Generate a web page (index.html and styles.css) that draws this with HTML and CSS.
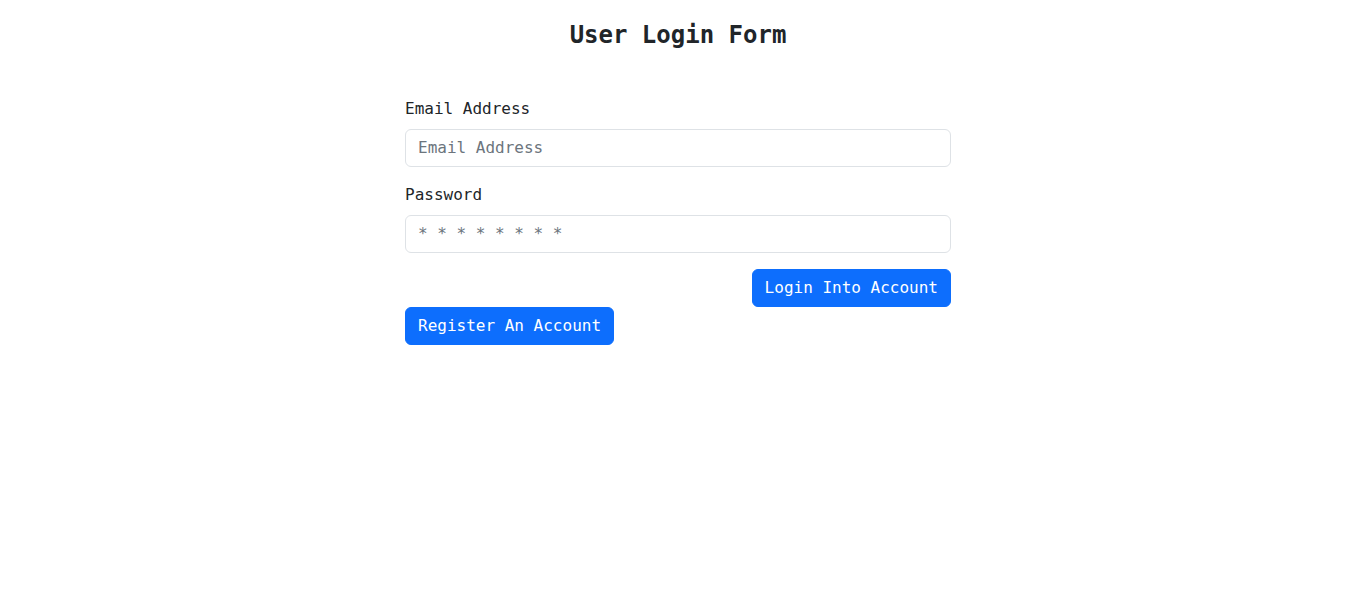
FILE: index.html
```html
<!DOCTYPE html>
<html lang="en">
<head>
<meta charset="utf-8">
<title>User Login Form</title>
<link rel="stylesheet" href="styles.css">
</head>
<body>
<div class="page">
  <h4 class="title">User Login Form</h4>
  <form class="login-form">
    <div class="field">
      <label class="label" for="email">Email Address</label>
      <input class="input" id="email" type="text" placeholder="Email Address">
    </div>
    <div class="field">
      <label class="label" for="password">Password</label>
      <input class="input" id="password" type="text" placeholder="* * * * * * * *">
    </div>
    <div class="actions">
      <button type="button" class="btn">Login Into Account</button>
    </div>
    <div class="actions-left">
      <button type="button" class="btn">Register An Account</button>
    </div>
  </form>
</div>
</body>
</html>
```
FILE: styles.css
```css
* { box-sizing: border-box; }
html, body {
  margin: 0;
  background: #fff;
  color: #212529;
  font-family: "DejaVu Sans Mono", "Liberation Mono", monospace;
  font-size: 16px;
  line-height: 1.5;
}
.page {
  width: 548px;
  margin: 0 auto;
  padding: 21px 2px 0 0;
}
.title {
  margin: 0 0 47px;
  text-align: center;
  font-size: 24px;
  font-weight: 700;
  line-height: 1.2;
}
.field {
  margin-bottom: 16px;
}
.label {
  display: block;
  margin-bottom: 8px;
}
.input {
  display: block;
  width: 100%;
  height: 38px;
  padding: 6px 12px;
  font: inherit;
  color: #212529;
  border: 1px solid #dee2e6;
  border-radius: 6px;
  background: #fff;
}
.input::placeholder { color: #6c757d; }
.actions {
  display: flex;
  justify-content: flex-end;
}
.actions-left {
  display: flex;
}
.btn {
  height: 38px;
  padding: 6px 12px;
  font: inherit;
  color: #fff;
  background: #0d6efd;
  border: 1px solid #0d6efd;
  border-radius: 6px;
}
```
